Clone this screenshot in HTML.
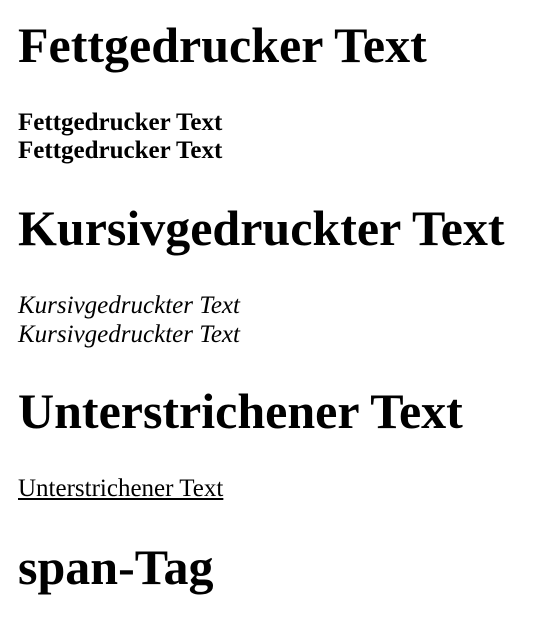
<!DOCTYPE html>
<html><head><meta charset="utf-8"><style>
body{margin:0;width:533px;height:626px;background:#fff;position:relative;overflow:hidden;font-family:"Liberation Serif",serif;color:#000}
div{position:absolute;left:18px;line-height:1;white-space:nowrap}
.h{font-size:50px;font-weight:bold}
.p{font-size:25px}
</style></head><body>
<div class="h" style="top:20px">Fettgedrucker Text</div>
<div class="p" style="top:110px;font-weight:bold">Fettgedrucker Text</div>
<div class="p" style="top:138px;font-weight:bold">Fettgedrucker Text</div>
<div class="h" style="top:203px">Kursivgedruckter Text</div>
<div class="p" style="top:293px;font-style:italic">Kursivgedruckter Text</div>
<div class="p" style="top:322px;font-style:italic">Kursivgedruckter Text</div>
<div class="h" style="top:386px">Unterstrichener Text</div>
<div class="p" style="top:476px;text-decoration:underline">Unterstrichener Text</div>
<div class="h" style="top:542px">span-Tag</div>
</body></html>
